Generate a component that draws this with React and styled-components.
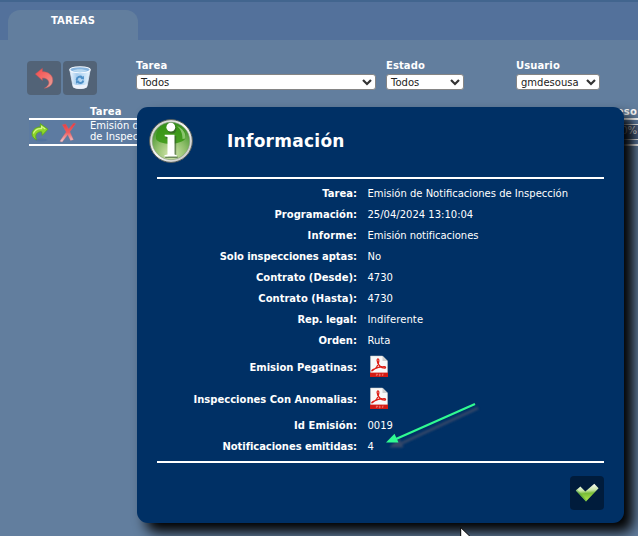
import React from "react";
import styled, { createGlobalStyle } from "styled-components";

const GlobalStyle = createGlobalStyle`
  * { box-sizing: border-box; }
  html, body { margin: 0; height: 100%; overflow: hidden; }
  body { background: #627e9e; font-family: Verdana, "DejaVu Sans", sans-serif; font-size: 10px; color: #fff; }
`;

const Page = styled.div`
  position: relative;
  width: 638px;
  height: 536px;
  overflow: hidden;
  background: #627e9e;
`;

const TabBar = styled.header`
  height: 40px;
  padding: 8px 8px 0;
  border-top: 2px solid #42658e;
  background: #53719b;
`;

const Tab = styled.div`
  width: 130px;
  height: 30px;
  border-radius: 12px 12px 0 0;
  background: #627e9e;
  text-align: center;
  font-weight: bold;
  line-height: 21px;
  letter-spacing: 0.15px;
`;

const Toolbar = styled.div`
  display: flex;
  align-items: flex-start;
  height: 64px;
  padding: 20px 0 0 27px;
`;

const IconButton = styled.button`
  display: flex;
  align-items: center;
  justify-content: center;
  width: 34px;
  height: 34px;
  margin: 1px 2px 0 0;
  padding: 0;
  border: 0;
  border-radius: 4px;
  background: ${(p) => (p.$dark ? "#001c3c" : "#526377")};
`;

const Filters = styled.div`
  display: flex;
  margin-left: 37px;
  gap: 10px;
`;

const Field = styled.label`
  display: block;
  width: ${(p) => p.$width}px;
  margin-right: ${(p) => p.$gap || 0}px;
  font-weight: bold;
  line-height: 12px;
`;

const SelectBox = styled.div`
  display: flex;
  align-items: center;
  justify-content: space-between;
  height: 16px;
  margin-top: 2px;
  padding: 1px 3px 0 4px;
  border: 1px solid #858585;
  border-radius: 3px;
  background: #fff;
  color: #222;
  font-weight: normal;
`;

const Run = styled.span`
  white-space: nowrap;
  letter-spacing: ${(p) => p.$spacing || 0}px;
`;

const TaskTable = styled.section`
  width: 660px;
  margin: 2px 0 0 29px;
`;

const TableHead = styled.div`
  display: flex;
  justify-content: space-between;
  height: 14px;
  padding: 0 52px 0 61px;
  border-bottom: 2px solid #fff;
  font-weight: bold;
  line-height: 12px;
  letter-spacing: 0.2px;
`;

const TableRow = styled.div`
  display: flex;
  align-items: center;
  height: 26px;
  border-bottom: 2px solid #fff;
  background: #5d7ba1;
`;

const RowIcons = styled.div`
  display: flex;
  gap: 9px;
  width: 61px;
  padding-left: 1px;
`;

const TaskName = styled.div`
  flex: 1;
  line-height: 11px;
  margin-top: -2px;
`;

const Progress = styled.div`
  width: 94px;
  height: 16px;
  margin-right: 38px;
  padding-right: 13px;
  border: 1px solid #fff;
  background: #4a6286;
  text-align: right;
  line-height: 12px;
`;

const Dialog = styled.section`
  position: absolute;
  left: 137px;
  top: 107px;
  width: 487px;
  height: 416px;
  padding: 0 20px;
  border-radius: 11px;
  background: #003065;
  box-shadow: 9px 9px 13px #000;
`;

const DialogHead = styled.header`
  display: flex;
  align-items: center;
  height: 72px;
  padding-bottom: 2px;
  border-bottom: 2px solid #fff;
`;

const InfoMark = styled.div`
  width: 46px;
  height: 46px;
  margin-left: -9px;
`;

const Title = styled.h1`
  margin: 0 0 0 33px;
  font-size: 17px;
  line-height: 22px;
  letter-spacing: 0.27px;
`;

const Details = styled.dl`
  height: 284px;
  margin: 0;
  padding-top: 4px;
  border-bottom: 2px solid #fff;
`;

const Detail = styled.div`
  display: grid;
  grid-template-columns: 200px 1fr;
  column-gap: 10.5px;
  align-items: center;
  height: ${(p) => (p.$file ? 32 : 21)}px;
  line-height: 12px;
`;

const Label = styled.dt`
  text-align: right;
  font-weight: bold;
  padding-top: ${(p) => (p.$file ? 1 : 0)}px;
`;

const Value = styled.dd`
  display: flex;
  margin: 0;
`;

const DialogActions = styled.footer`
  display: flex;
  justify-content: flex-end;
  padding-top: 12px;

  ${IconButton} { margin-right: 0; }
`;

const Overlay = styled.svg`
  position: absolute;
  left: ${(p) => p.$x}px;
  top: ${(p) => p.$y}px;
`;

const Chevron = () => (
  <svg width="10" height="7" viewBox="0 0 10 7">
    <path d="M1 1 5 5 9 1" fill="none" stroke="#333" strokeWidth="2.2" />
  </svg>
);

const UndoIcon = () => (
  <svg width="34" height="34" viewBox="0 0 34 34">
    <defs>
      <linearGradient id="undo" x1="0" y1="0" x2="0.7" y2="1">
        <stop offset="0" stopColor="#ef4a4c" /><stop offset=".55" stopColor="#f4706c" /><stop offset="1" stopColor="#e79a93" />
      </linearGradient>
    </defs>
    <path d="M8.3 13 15.4 7.3v3.3c6.4.3 10.5 3.8 10.4 8.8-.1 3.9-2.8 7-8.5 7.8 3.7-2 4.9-4.2 4.5-6.2-.5-2.5-2.7-3.9-6.4-4.1v2.6z" fill="url(#undo)" stroke="#bb5559" strokeWidth=".5" />
  </svg>
);

const TrashIcon = () => (
  <svg width="34" height="34" viewBox="0 0 34 34">
    <defs>
      <linearGradient id="bin"><stop offset="0" stopColor="#eef7ff" /><stop offset=".35" stopColor="#a5cbed" /><stop offset=".7" stopColor="#c6e1f7" /><stop offset="1" stopColor="#e8f4fc" /></linearGradient>
    </defs>
    <path d="M6.8 8.5 10 25.6c2 2.6 12 2.6 14 0L27.2 8.5z" fill="url(#bin)" stroke="#dceafa" strokeWidth=".8" />
    <path d="M9.8 23c3 1.6 11.4 1.6 14.4 0l-.6 3.4c-3 1.8-10.2 1.8-13.2 0z" fill="#eef2fb" />
    <ellipse cx="17" cy="8.7" rx="10.2" ry="3" fill="#86b4df" stroke="#f2f8ff" strokeWidth="1.1" />
    <path d="M9.5 10c3-2.2 11-2.3 15 0-3 1.5-12 1.5-15 0" fill="#b8d8f0" />
    <path d="M13.7 19c0-3 3.6-4.4 5.6-2.4M20.3 19.5c-.5 3-4 3.4-5.6 1.2" fill="none" stroke="#4e90c8" strokeWidth="2" />
    <path d="m20.8 14.8.2 3.7-3.6-.5zM13 22.7l.1-3.6 3.4.8z" fill="#4e90c8" />
  </svg>
);

const RedoIcon = () => (
  <svg width="20" height="20" viewBox="0 0 20 20">
    <ellipse cx="11" cy="18" rx="6.5" ry="1.5" fill="#4e719e" opacity=".7" />
    <path d="M6.6 18C1.8 15.5.8 11.3 3.6 7.9 5.5 5.6 8 4.8 10.6 4.9L10.2 1.5 18 7.2l-5.8 6.2-.5-3.6C7.2 9.2 4.2 13 6.6 18z" fill="#8ed62a" stroke="#58a719" strokeWidth=".8" />
    <path d="M3.4 11.5c1.6-4 4.7-5.2 8.3-4.8l-.2-2.4L15.3 7" fill="none" stroke="#d5f78b" strokeWidth="1.1" />
  </svg>
);

const CrossIcon = () => (
  <svg width="20" height="21" viewBox="0 0 20 21">
    <defs><linearGradient id="cross" x1="0" y1="0" x2="0" y2="1"><stop offset="0" stopColor="#e93a3f" /><stop offset=".5" stopColor="#f05f60" /><stop offset="1" stopColor="#efd0d4" /></linearGradient></defs>
    <path d="m3.3 2.7 3.4-.6 3 5L14.5 1.2l2.3.3-5.9 8.3 3.6 8-3 .6-2.8-5.7-5.5 7.4-2.4-.8 6.3-9.4z" fill="url(#cross)" stroke="#cc6973" strokeWidth=".3" />
  </svg>
);

const InfoIcon = () => (
  <svg width="46" height="46" viewBox="0 0 46 46">
    <defs>
      <linearGradient id="ring" x1="0" y1="0" x2="1" y2="1"><stop stopColor="#c6c8c3" /><stop offset=".5" stopColor="#f7f7f5" /><stop offset="1" stopColor="#bbb" /></linearGradient>
      <radialGradient id="globe" cx=".5" cy=".85" r=".8"><stop stopColor="#d7e8b1" /><stop offset=".5" stopColor="#91bf6c" /><stop offset="1" stopColor="#398d25" /></radialGradient>
    </defs>
    <circle cx="23" cy="23" r="21.4" fill="url(#ring)" stroke="#545c59" />
    <circle cx="23" cy="23" r="18.7" fill="url(#globe)" stroke="#819a74" strokeWidth=".6" />
    <path d="M8 21C7 12 14 6 23 6S39 13 38 20c-4 7-26 8-30 1z" fill="#379713" opacity=".85" />
    <path d="M29 8c6 2.5 9 7 8.5 12.5l-3 .5c0-6-2-10-5.5-13z" fill="#bde1a5" opacity=".6" />
    <g fill="#35542d" opacity=".6" transform="translate(1.2 1)"><circle cx="22.8" cy="10" r="4.5" /><path d="M16.5 17H27v20.6h1.5V39H16v-1.4h3V19.5h-2.5z" /></g>
    <circle cx="22.8" cy="9.2" r="4.4" fill="#fff" />
    <path d="M16.7 16.7H26.5v19.8l2.3.7v1.2H16.5v-1.2l3-.7V19l-2.8-.8z" fill="#fff" />
  </svg>
);

const PdfIcon = () => (
  <svg width="22" height="24" viewBox="0 0 22 24">
    <path d="M2.5 1h12L19.5 6V20h-17z" fill="#f8f8f8" stroke="#c9c9c9" strokeWidth=".5" />
    <path d="M14.5 1v5h5z" fill="#cfcfcf" />
    <path d="M5 15.2c3-1 5.7-5.5 5.9-9.6.1-2.2-1.9-2.3-1.8-.2.2 4 4 7.6 7.4 7.8 1.6 0 1.4-1.5-.3-1.5-4 0-8.2 1.2-11.2 2.8-1.8 1.2-1.6 2 0 .7z" fill="none" stroke="#dd1b12" strokeWidth="1.2" />
    <path d="M2 17.6h18V22H2z" fill="#d31a13" />
    <path d="M8.4 21v-2h1.2v1H8.4m3 1v-2h.7v2zm3 0v-2h1.2m-1.2 1h1" fill="none" stroke="#f18b83" strokeWidth=".6" />
  </svg>
);

const CheckIcon = () => (
  <svg width="34" height="34" viewBox="0 0 34 34">
    <defs><linearGradient id="check" x1=".4" y1="0" x2=".5" y2="1"><stop stopColor="#fff" /><stop offset=".38" stopColor="#c7e5a5" /><stop offset=".55" stopColor="#79bd37" /><stop offset="1" stopColor="#b5ea4e" /></linearGradient></defs>
    <path d="M5.8 14.6 10.4 10.4 15.3 15.6 24.3 7.8 28.6 12.3 16 25.4z" fill="url(#check)" />
    <path d="m5.8 14.6 10.2 10.8 1-1L7 13.5z" fill="#4ba53b" opacity=".5" />
  </svg>
);

const details = [
  { label: "Tarea:", value: "Emisión de Notificaciones de Inspección" },
  { label: "Programación:", value: "25/04/2024 13:10:04" },
  { label: "Informe:", value: "Emisión notificaciones", spacing: 0.15, valueSpacing: -0.03 },
  { label: "Solo inspecciones aptas:", value: "No", spacing: -0.08 },
  { label: "Contrato (Desde):", value: "4730" },
  { label: "Contrato (Hasta):", value: "4730" },
  { label: "Rep. legal:", value: "Indiferente", spacing: -0.08, valueSpacing: 0.1 },
  { label: "Orden:", value: "Ruta" },
  { label: "Emision Pegatinas:", file: true },
  { label: "Inspecciones Con Anomalias:", file: true },
  { label: "Id Emisión:", value: "0019", spacing: 0.05 },
  { label: "Notificaciones emitidas:", value: "4", spacing: -0.07 },
];

const Filter = ({ label, value, width, gap }) => (
  <Field $width={width} $gap={gap}>
    <Run $spacing={0.1}>{label}</Run>
    <SelectBox><Run>{value}</Run><Chevron /></SelectBox>
  </Field>
);

export default function App() {
  return (
    <Page>
      <GlobalStyle />
      <TabBar><Tab>TAREAS</Tab></TabBar>
      <Toolbar>
        <IconButton aria-label="Volver"><UndoIcon /></IconButton>
        <IconButton aria-label="Eliminar"><TrashIcon /></IconButton>
        <Filters>
          <Filter label="Tarea" value="Todos" width={240} />
          <Filter label="Estado" value="Todos" width={78} gap={42} />
          <Filter label="Usuario" value="gmdesousa" width={84} />
        </Filters>
      </Toolbar>
      <TaskTable>
        <TableHead><span>Tarea</span><span>Progreso</span></TableHead>
        <TableRow>
          <RowIcons><RedoIcon /><CrossIcon /></RowIcons>
          <TaskName>Emisión de Notificaciones<br />de Inspección</TaskName>
          <Progress>100%</Progress>
        </TableRow>
      </TaskTable>
      <Dialog role="dialog" aria-label="Información">
        <DialogHead><InfoMark><InfoIcon /></InfoMark><Title>Información</Title></DialogHead>
        <Details>
          {details.map(({ label, value, file, spacing, valueSpacing }) => (
            <Detail key={label} $file={file}>
              <Label $file={file}><Run $spacing={spacing}>{label}</Run></Label>
              <Value>{file ? <PdfIcon /> : <Run $spacing={valueSpacing}>{value}</Run>}</Value>
            </Detail>
          ))}
        </Details>
        <DialogActions><IconButton $dark aria-label="Aceptar"><CheckIcon /></IconButton></DialogActions>
      </Dialog>
      <Overlay $x={380} $y={395} width="108" height="60" viewBox="0 0 108 60">
        <defs><filter id="soft"><feGaussianBlur stdDeviation="1" /></filter></defs>
        <g fill="#46506b" stroke="#46506b" transform="translate(4 4)" filter="url(#soft)" opacity=".75"><path d="M94 9 16 45" strokeWidth="3" /><path d="m6 48 9-8 4 8z" /></g>
        <path d="M95 9 16 44" stroke="#30fa91" strokeWidth="2.2" />
        <path d="m6 47.5 8.5-8.8 4 8.8z" fill="#30fa91" />
      </Overlay>
      <Overlay $x={460} $y={527} width="14" height="20" viewBox="0 0 14 20">
        <path d="M.7.5v16l4-4 3 6 2-1-3-6h5.5z" fill="#fff" stroke="#000" />
      </Overlay>
    </Page>
  );
}
